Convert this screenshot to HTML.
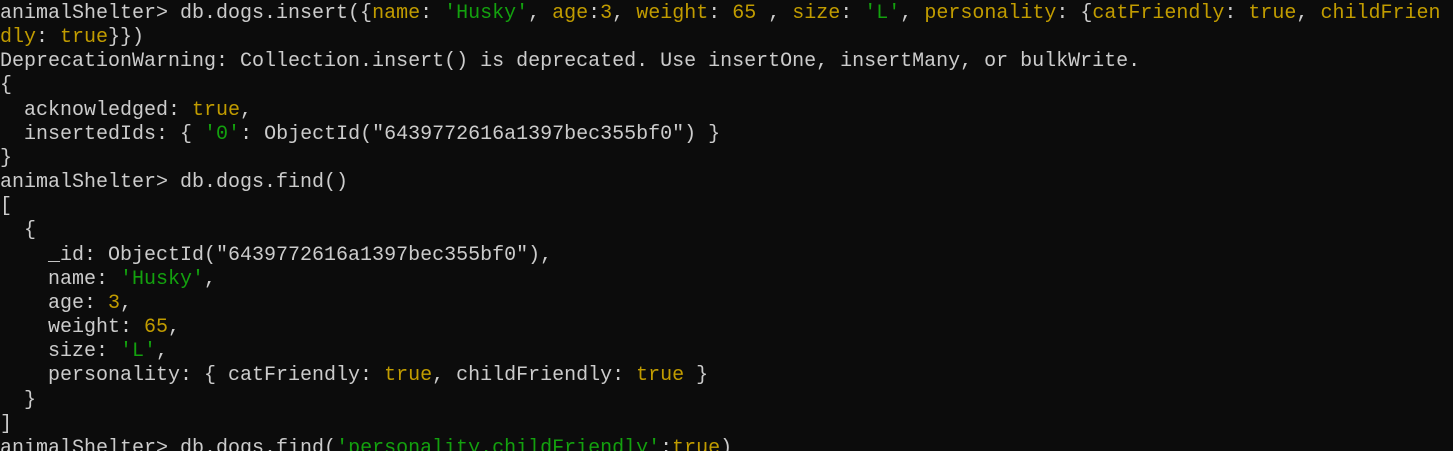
<!DOCTYPE html>
<html><head><meta charset="utf-8"><style>
html,body{margin:0;padding:0;background:#0c0c0c;width:1453px;height:451px;overflow:hidden}
pre{margin:0;padding:2px 0 0 0;font-family:"Liberation Mono","DejaVu Sans Mono",monospace;font-size:20px;line-height:24.15px;color:#cccccc;white-space:pre}
.y{color:#c19c00}.g{color:#13a10e}
</style></head><body><pre>animalShelter&gt; db.dogs.insert({<span class="y">name</span>: <span class="g">'Husky'</span>, <span class="y">age</span>:<span class="y">3</span>, <span class="y">weight</span>: <span class="y">65</span> , <span class="y">size</span>: <span class="g">'L'</span>, <span class="y">personality</span>: {<span class="y">catFriendly</span>: <span class="y">true</span>, <span class="y">childFrien</span>
<span class="y">dly</span>: <span class="y">true</span>}})
DeprecationWarning: Collection.insert() is deprecated. Use insertOne, insertMany, or bulkWrite.
{
  acknowledged: <span class="y">true</span>,
  insertedIds: { <span class="g">'0'</span>: ObjectId("6439772616a1397bec355bf0") }
}
animalShelter&gt; db.dogs.find()
[
  {
    _id: ObjectId("6439772616a1397bec355bf0"),
    name: <span class="g">'Husky'</span>,
    age: <span class="y">3</span>,
    weight: <span class="y">65</span>,
    size: <span class="g">'L'</span>,
    personality: { catFriendly: <span class="y">true</span>, childFriendly: <span class="y">true</span> }
  }
]
animalShelter&gt; db.dogs.find(<span class="g">'personality.childFriendly'</span>:<span class="y">true</span>)</pre></body></html>
